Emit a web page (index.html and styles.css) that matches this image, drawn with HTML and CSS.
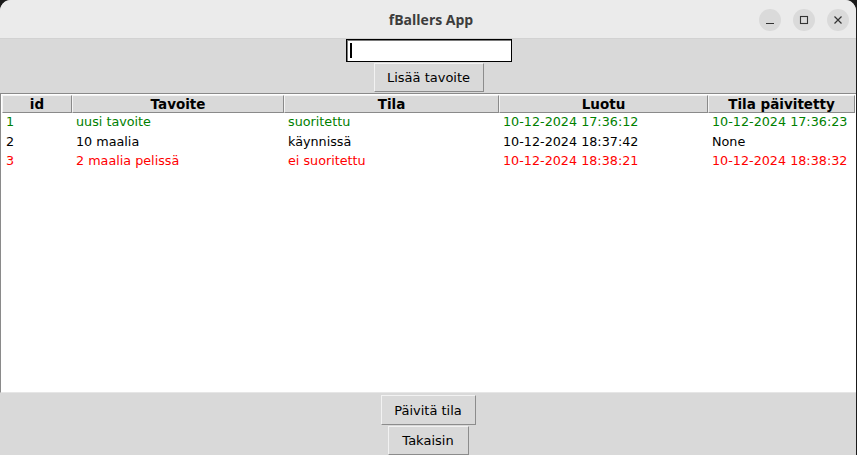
FILE: index.html
```html
<!DOCTYPE html>
<html>
<head>
<meta charset="utf-8">
<link rel="stylesheet" href="styles.css">
</head>
<body>
<div class="window">
  <header class="titlebar">
    <span class="title">fBallers App</span>
    <div class="controls">
      <span class="ctl"><svg width="10" height="10" viewBox="0 0 10 10"><path d="M1 8.5h8" stroke="#333" stroke-width="1.2"/></svg></span>
      <span class="ctl"><svg width="10" height="10" viewBox="0 0 10 10"><rect x="1.5" y="1.5" width="7" height="7" fill="none" stroke="#333" stroke-width="1.1"/></svg></span>
      <span class="ctl"><svg width="10" height="10" viewBox="0 0 10 10"><path d="M1.5 1.5l7 7M8.5 1.5l-7 7" stroke="#333" stroke-width="1.2"/></svg></span>
    </div>
  </header>
  <main class="content">
    <div class="entry"><span class="caret"></span></div>
    <button class="btn btn-add">Lisää tavoite</button>
    <div class="table">
      <div class="row head">
        <div class="c c1">id</div>
        <div class="c c2">Tavoite</div>
        <div class="c c3">Tila</div>
        <div class="c c4">Luotu</div>
        <div class="c c5">Tila päivitetty</div>
      </div>
      <div class="row green">
        <div class="c c1">1</div>
        <div class="c c2">uusi tavoite</div>
        <div class="c c3">suoritettu</div>
        <div class="c c4">10-12-2024 17:36:12</div>
        <div class="c c5">10-12-2024 17:36:23</div>
      </div>
      <div class="row">
        <div class="c c1">2</div>
        <div class="c c2">10 maalia</div>
        <div class="c c3">käynnissä</div>
        <div class="c c4">10-12-2024 18:37:42</div>
        <div class="c c5">None</div>
      </div>
      <div class="row red">
        <div class="c c1">3</div>
        <div class="c c2">2 maalia pelissä</div>
        <div class="c c3">ei suoritettu</div>
        <div class="c c4">10-12-2024 18:38:21</div>
        <div class="c c5">10-12-2024 18:38:32</div>
      </div>
    </div>
    <button class="btn btn-update">Päivitä tila</button>
    <button class="btn btn-back">Takaisin</button>
  </main>
</div>
</body>
</html>
```

FILE: styles.css
```css
html, body {
  margin: 0;
  padding: 0;
  background: #1a1a1a;
}
body {
  width: 857px;
  height: 455px;
  overflow: hidden;
  font-family: "DejaVu Sans", sans-serif;
}
.window {
  width: 856px;
  height: 455px;
  display: flex;
  flex-direction: column;
  border-radius: 11px 11px 0 0;
  overflow: hidden;
  background: #d9d9d9;
}
.titlebar {
  height: 38px;
  flex: none;
  background: #ebebeb;
  border-bottom: 1px solid #d2d2d2;
  display: flex;
  align-items: center;
  justify-content: center;
  position: relative;
}
.title {
  font-family: "Open Sans", "DejaVu Sans", sans-serif;
  font-weight: 700;
  font-size: 14px;
  color: #3c3c3c;
  margin-left: 6px;
}
.controls {
  position: absolute;
  right: 7px;
  top: 9px;
  display: flex;
  gap: 12px;
}
.ctl {
  width: 22px;
  height: 22px;
  border-radius: 50%;
  background: #dadada;
  display: flex;
  align-items: center;
  justify-content: center;
}
.content {
  flex: 1;
  display: flex;
  flex-direction: column;
  align-items: center;
}
.entry {
  width: 162px;
  height: 19px;
  background: #fff;
  border: 1px solid #000;
  box-shadow: inset 1px 1px 0 #7a7a7a;
  margin-left: 1px;
  box-sizing: content-box;
  padding: 1px;
  display: flex;
  align-items: center;
}
.caret {
  width: 2px;
  height: 15px;
  margin-left: 2px;
  background: #000;
}
.btn {
  font-family: "DejaVu Sans", sans-serif;
  font-size: 13px;
  color: #000;
  background: #d9d9d9;
  border: 1px solid;
  border-color: #f2f2f2 #8c8c8c #8c8c8c #f2f2f2;
  padding: 0;
  margin: 0;
  box-sizing: border-box;
}
.btn-add {
  width: 110px;
  height: 29px;
  margin-top: 1px;
  margin-left: 1px;
}
.btn-update {
  width: 95px;
  height: 30px;
  margin-top: 2px;
  margin-left: 0;
}
.btn-back {
  width: 81px;
  height: 29px;
  margin-top: 1px;
}
.table {
  align-self: stretch;
  height: 300px;
  margin-top: 1px;
  background: #fff;
  border-left: 1px solid #8a8a8a;
  border-top: 1px solid #8a8a8a;
  border-bottom: 1px solid #e6e6e6;
  box-sizing: border-box;
  font-size: 12.75px;
  color: #000;
}
.row {
  display: flex;
  height: 19.5px;
  align-items: flex-start;
  line-height: 16px;
}
.row.head {
  height: 18px;
  padding-top: 1px;
  margin-bottom: 1px;
  align-items: stretch;
  box-sizing: content-box;
}
.c {
  padding-left: 5px;
  box-sizing: border-box;
  white-space: nowrap;
}
.c1 { width: 70px; }
.c2 { width: 212px; }
.c3 { width: 215px; }
.c4 { width: 209px; }
.c5 { width: 147px; }
.head .c {
  padding: 0;
  text-align: center;
  font-weight: 700;
  font-size: 13.5px;
  background: #d9d9d9;
  border: 1px solid;
  border-color: #f4f4f4 #8a8a8a #8a8a8a #f4f4f4;
  line-height: 16px;
}
.head .c1 { margin-left: 1px; }
.green { color: #008000; }
.red { color: #ff0000; }
```
